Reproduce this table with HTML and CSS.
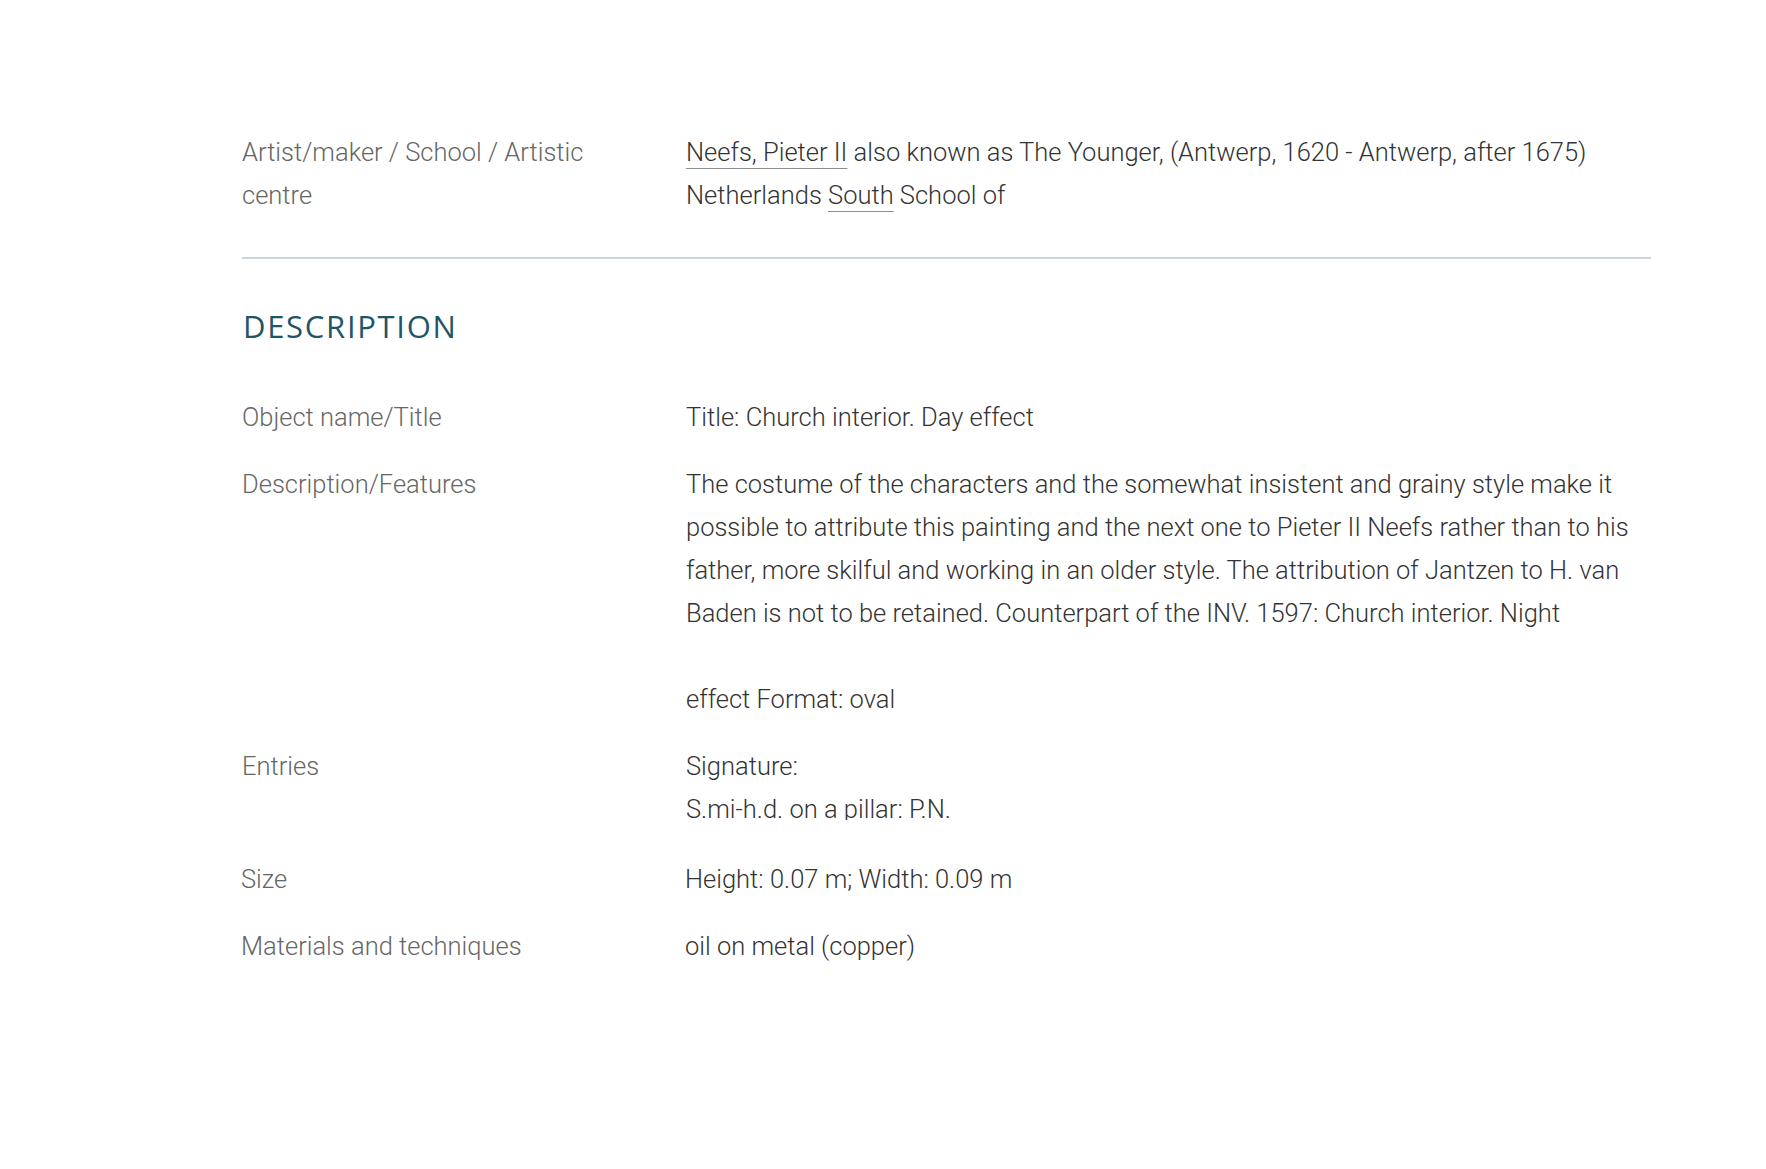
FILE: index.html
```html
<!DOCTYPE html>
<html>
<head>
	<meta charset="utf-8">
	<title>Church interior. Day effect</title>
	<link rel="stylesheet" href="styles.css">
</head>
<body>
	<div class="record">
		<div class="field intro">
			<div class="label">Artist/maker / School / Artistic centre</div>
			<div class="value">
				<a href="#">Neefs, Pieter II</a> also known as The Younger, (Antwerp, 1620 - Antwerp, after 1675)<br>
				Netherlands <a href="#">South</a> School of
			</div>
		</div>
		<hr class="divider">
		<h2 class="section-title">Description</h2>
		<div class="field">
			<div class="label">Object name/Title</div>
			<div class="value">Title: Church interior. Day effect</div>
		</div>
		<div class="field">
			<div class="label">Description/Features</div>
			<div class="value">The costume of the characters and the somewhat insistent and grainy style make it possible to attribute this painting and the next one to Pieter II Neefs rather than to his father, more skilful and working in an older style. The attribution of Jantzen to H. van Baden is not to be retained. Counterpart of the INV. 1597: Church interior. Night<br><br>effect Format: oval</div>
		</div>
		<div class="field clipped">
			<div class="label">Entries</div>
			<div class="value">Signature:<br>S.mi-h.d. on a pillar: P.N.</div>
		</div>
		<div class="field shifted">
			<div class="label">Size</div>
			<div class="value">Height: 0.07 m; Width: 0.09 m</div>
		</div>
		<div class="field shifted">
			<div class="label">Materials and techniques</div>
			<div class="value">oil on metal (copper)</div>
		</div>
	</div>
</body>
</html>
```

FILE: styles.css
```css
body,html{
	margin: 0;
	padding: 0;
	background: #fff;
}
body{
	font-family: "Roboto Light", Roboto, "Liberation Sans", sans-serif;
	font-weight: 300;
	font-size: 25.5px;
	line-height: 43px;
}
.record{
	width: 1409px;
	padding: 131px 0 80px 242px;
}
.field{
	display: grid;
	grid-template-columns: 400px 1fr;
	column-gap: 44px;
	margin-bottom: 24px;
}
.field.intro{
	margin-bottom: 0;
}
.label{
	color: #666;
}
.value{
	color: #333;
}
.value a{
	color: #333;
	text-decoration: underline;
	text-decoration-color: #8c8c8c;
	text-decoration-thickness: 1px;
	text-underline-offset: 7px;
}
.divider{
	margin: 40px 0 0;
	border: 0;
	border-top: 2px solid #c7d7dc;
}
.section-title{
	margin: 52px 0 54px 1px;
	font-family: "Open Sans", "Liberation Sans", sans-serif;
	font-weight: 400;
	font-size: 31px;
	line-height: 31px;
	letter-spacing: 1.7px;
	text-transform: uppercase;
	color: #1f5566;
}
.field.clipped{
	margin-bottom: 38px;
}
.field.clipped .value{
	height: 75px;
	overflow: hidden;
}
.field.shifted{
	margin-left: -1px;
}
```
